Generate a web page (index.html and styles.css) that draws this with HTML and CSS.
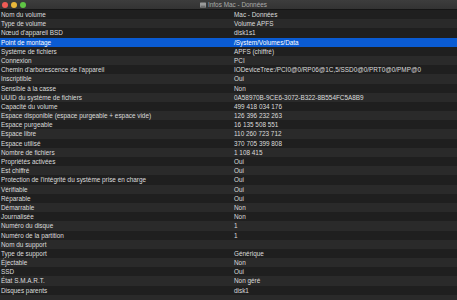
FILE: index.html
```html
<!DOCTYPE html>
<html lang="fr">
<head>
    <meta charset="UTF-8">
    <meta name="viewport" content="width=device-width, initial-scale=1.0">
    <title>Infos Mac - Données</title>
    <link rel="stylesheet" href="styles.css">
</head>
<body>
<div class="window">
    <div class="titlebar">
        <div class="lights">
            <span class="light red"></span>
            <span class="light yellow"></span>
            <span class="light green"></span>
        </div>
        <div class="title">
            <svg class="disk-icon" width="6" height="6" viewBox="0 0 6 6">
                <rect x="0" y="0.5" width="6" height="5" rx="0.6" fill="#9a9a9a"/>
                <rect x="0.6" y="3.6" width="4.8" height="1.4" fill="#6e6e6e"/>
            </svg>
            <span>Infos Mac - Données</span>
        </div>
    </div>
    <!-- table of volume properties -->
    <div class="info-table">
        <div class="row"><span>Nom du volume</span><span>Mac - Données</span></div>
        <div class="row"><span>Type de volume</span><span>Volume APFS</span></div>
        <div class="row"><span>Nœud d'appareil BSD</span><span>disk1s1</span></div>
        <div class="row selected"><span>Point de montage</span><span>/System/Volumes/Data</span></div>
        <div class="row"><span>Système de fichiers</span><span>APFS (chiffré)</span></div>
        <div class="row"><span>Connexion</span><span>PCI</span></div>
        <div class="row"><span>Chemin d'arborescence de l'appareil</span><span>IODeviceTree:/PCI0@0/RP06@1C,5/SSD0@0/PRT0@0/PMP@0</span></div>
        <div class="row"><span>Inscriptible</span><span>Oui</span></div>
        <div class="row"><span>Sensible à la casse</span><span>Non</span></div>
        <div class="row"><span>UUID du système de fichiers</span><span>0A58970B-9CE6-3072-B322-8B554FC5A8B9</span></div>
        <div class="row"><span>Capacité du volume</span><span>499 418 034 176</span></div>
        <div class="row"><span>Espace disponible (espace purgeable + espace vide)</span><span>126 396 232 263</span></div>
        <div class="row"><span>Espace purgeable</span><span>16 135 508 551</span></div>
        <div class="row"><span>Espace libre</span><span>110 260 723 712</span></div>
        <div class="row"><span>Espace utilisé</span><span>370 705 399 808</span></div>
        <div class="row"><span>Nombre de fichiers</span><span>1 108 415</span></div>
        <div class="row"><span>Propriétés activées</span><span>Oui</span></div>
        <div class="row"><span>Est chiffré</span><span>Oui</span></div>
        <div class="row"><span>Protection de l'intégrité du système prise en charge</span><span>Oui</span></div>
        <div class="row"><span>Vérifiable</span><span>Oui</span></div>
        <div class="row"><span>Réparable</span><span>Oui</span></div>
        <div class="row"><span>Démarrable</span><span>Non</span></div>
        <div class="row"><span>Journalisée</span><span>Non</span></div>
        <div class="row"><span>Numéro du disque</span><span>1</span></div>
        <div class="row"><span>Numéro de la partition</span><span>1</span></div>
        <div class="row"><span>Nom du support</span><span></span></div>
        <div class="row"><span>Type de support</span><span>Générique</span></div>
        <div class="row"><span>Éjectable</span><span>Non</span></div>
        <div class="row"><span>SSD</span><span>Oui</span></div>
        <div class="row"><span>État S.M.A.R.T.</span><span>Non géré</span></div>
        <div class="row"><span>Disques parents</span><span>disk1</span></div>
        <div class="row"><span></span><span></span></div>
    </div>
</div>
</body>
</html>
```

FILE: styles.css
```css
body {
    margin: 0;
    background-color: #1f1f1f;
    font-family: "Liberation Sans", Arial, sans-serif;
    overflow: hidden;
}
.window {
    width: 457px;
    height: 300px;
    overflow: hidden;
}
.titlebar {
    position: relative;
    height: 10px;
    background: linear-gradient(#3d3d3d, #333333);
    border-bottom: 0.5px solid #151515;
    box-sizing: border-box;
    display: flex;
    align-items: center;
    justify-content: center;
}
.lights {
    position: absolute;
    left: 2px;
    top: 2px;
    display: flex;
    gap: 3px;
}
.light {
    width: 6px;
    height: 6px;
    border-radius: 50%;
}
.red { background-color: #ee5b55; }
.yellow { background-color: #e9b73a; }
.green { background-color: #5fc545; }
.title {
    display: flex;
    align-items: center;
    gap: 2px;
    font-size: 6.4px;
    color: #ababab;
    margin-left: 10px;
}
.info-table {
    display: flex;
    flex-direction: column;
}
.row {
    display: grid;
    grid-template-columns: 234px 1fr;
    height: 9.2px;
    line-height: 9.2px;
    font-size: 6.4px;
    color: #dcdcdc;
    white-space: nowrap;
    background-color: #1f1f1f;
}
.row:nth-child(even) {
    background-color: #2a2a2a;
}
.row span:first-child {
    padding-left: 1px;
}
.row.selected {
    background-color: #0a5bd3;
    color: #ffffff;
}
```
